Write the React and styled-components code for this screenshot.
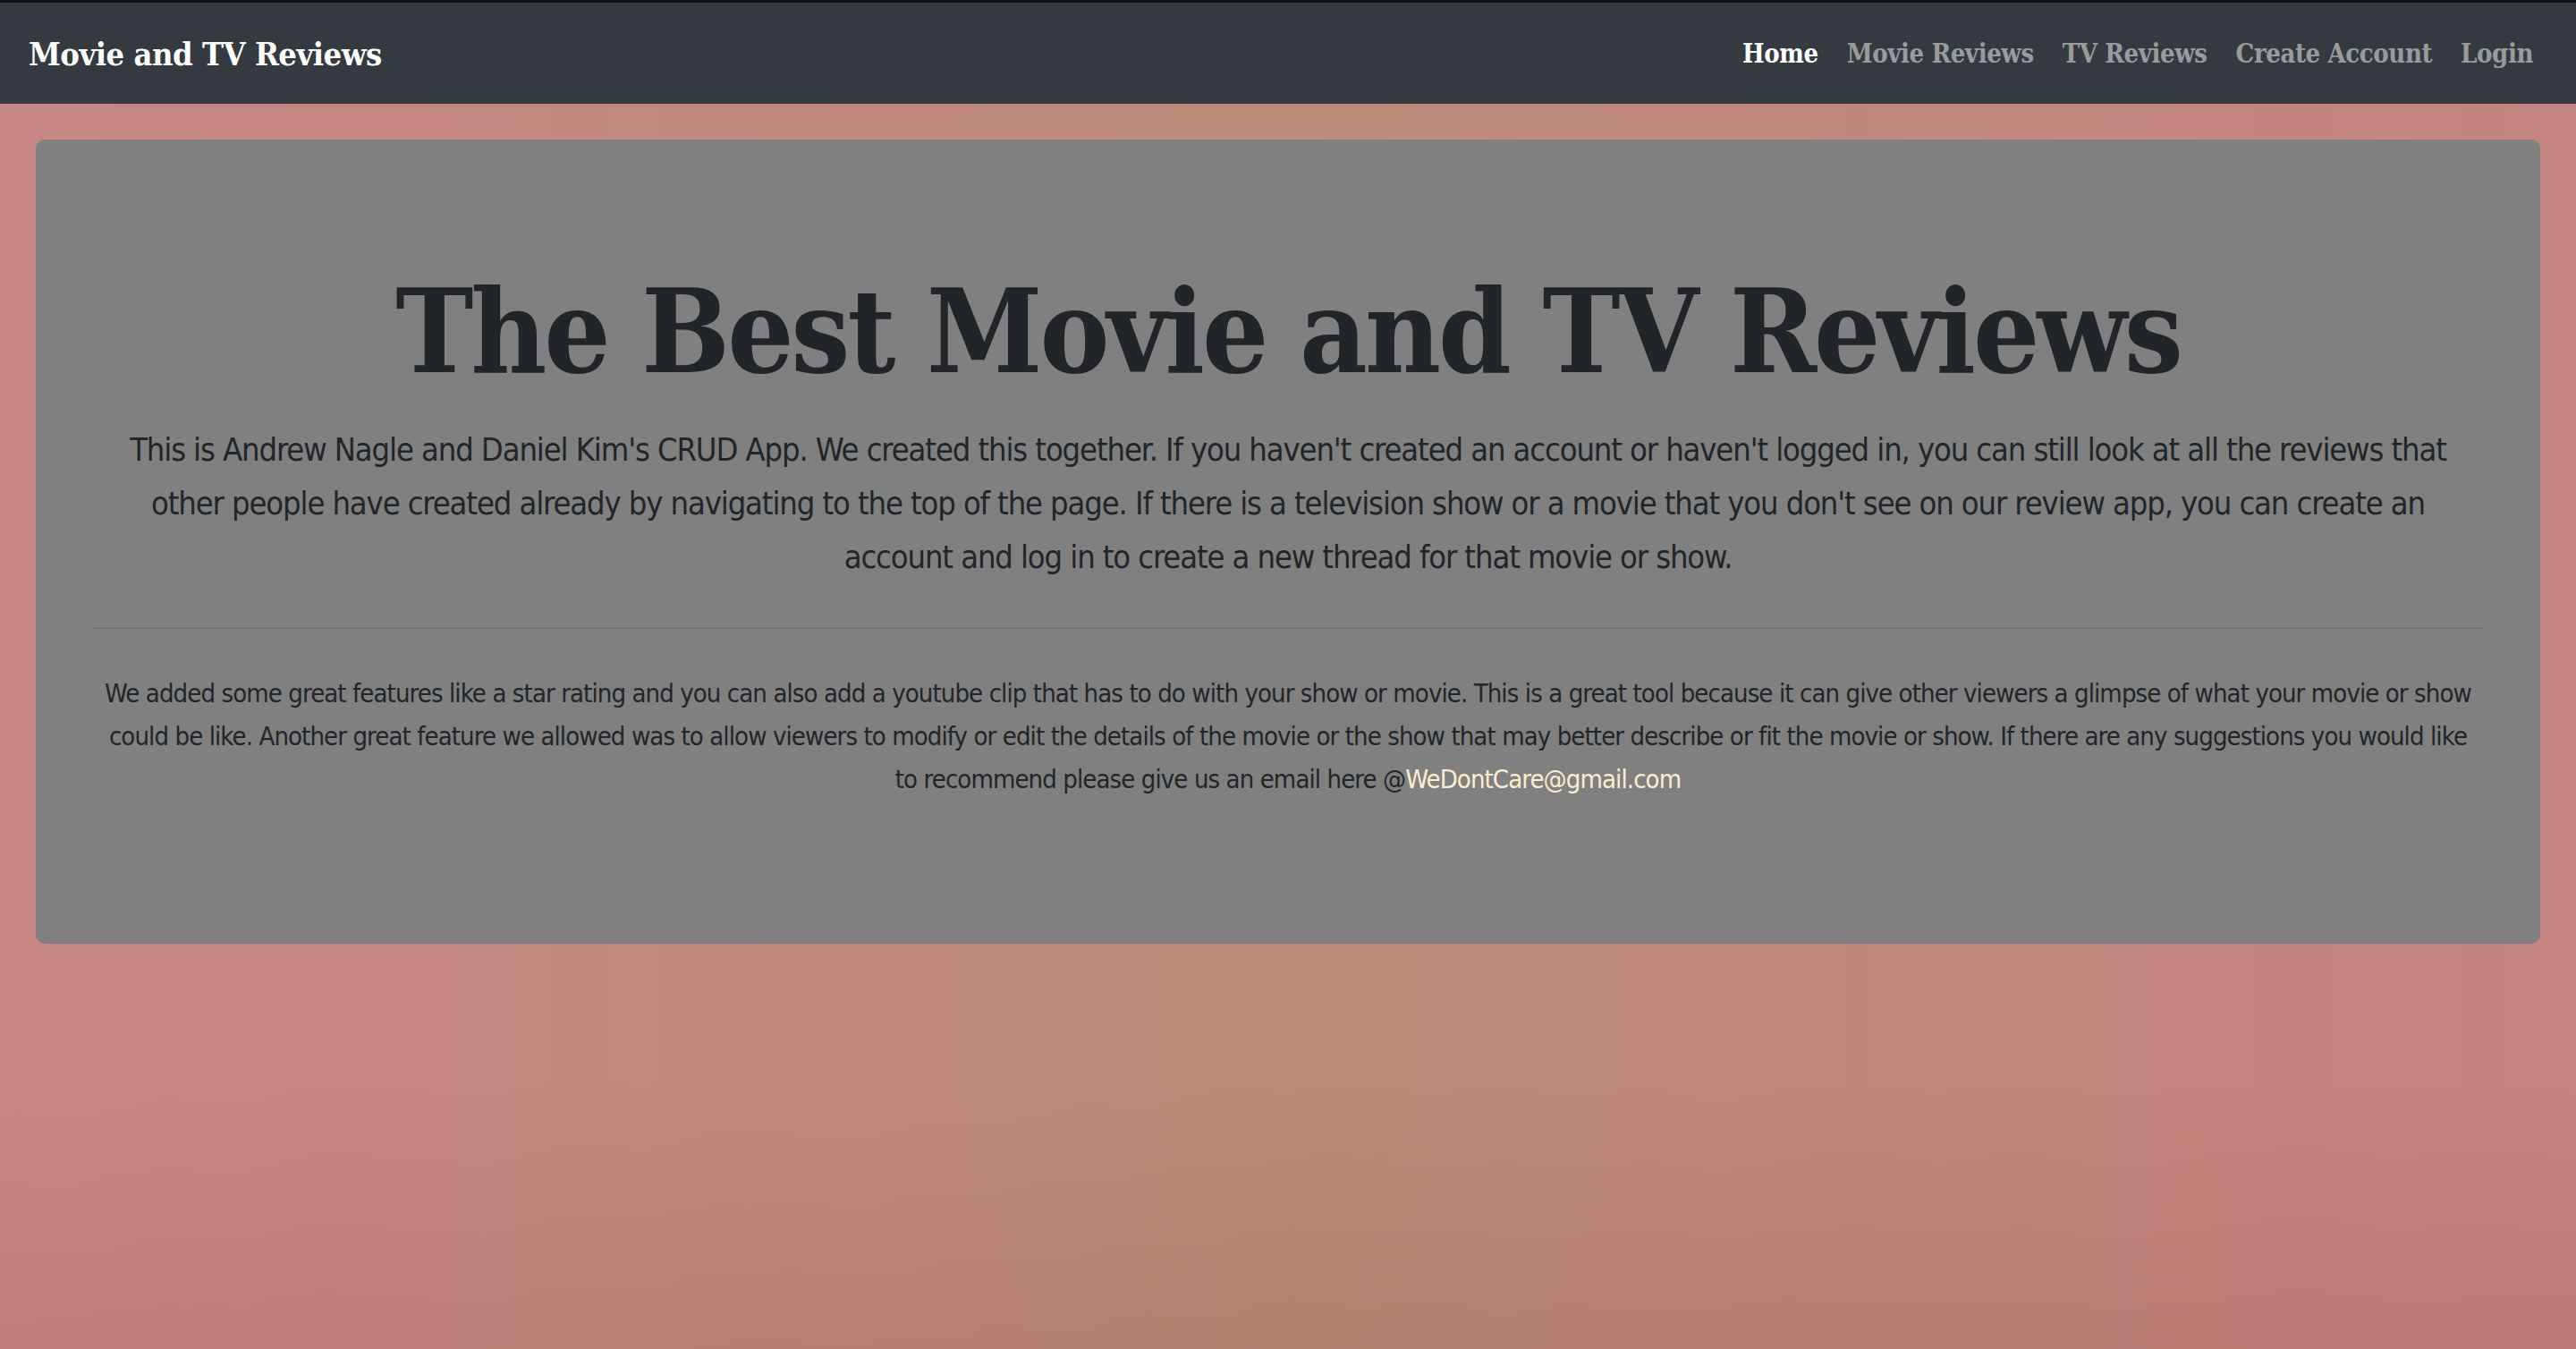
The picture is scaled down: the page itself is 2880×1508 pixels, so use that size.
import React from 'react';
import styled, { createGlobalStyle } from 'styled-components';

const GlobalStyle = createGlobalStyle`
  html, body {
    margin: 0;
    padding: 0;
  }
  body {
    min-height: 1508px;
    font-family: "DejaVu Sans Condensed", "DejaVu Sans", sans-serif;
    color: #212529;
    background:
      linear-gradient(to bottom, rgba(120, 60, 50, 0) 80%, rgba(120, 60, 50, 0.12) 100%),
      linear-gradient(to right, #c88784 0%, #c2897e 25%, #bb8b77 50%, #c0877c 75%, #c4847f 100%);
  }
`;

const Page = styled.div`
  min-height: 1508px;
  display: flex;
  flex-direction: column;
`;

const Navbar = styled.nav`
  display: flex;
  align-items: center;
  justify-content: space-between;
  height: 113px;
  padding: 0 32px;
  border-top: 3px solid #121212;
  background: #343a40;
`;

const Brand = styled.a`
  font-family: "DejaVu Serif Condensed", "DejaVu Serif", serif;
  font-weight: 700;
  font-size: 36px;
  letter-spacing: -0.5px;
  color: #fff;
  text-decoration: none;
`;

const NavList = styled.ul`
  display: flex;
  margin: 0;
  padding: 0;
  list-style: none;
`;

const NavLink = styled.a`
  display: block;
  padding: 10px 16px;
  font-family: "DejaVu Serif Condensed", "DejaVu Serif", serif;
  font-weight: 700;
  font-size: 29px;
  letter-spacing: -0.4px;
  color: ${({ active }) => (active ? '#ffffff' : 'rgba(255, 255, 255, 0.5)')};
  text-decoration: none;
`;

const Main = styled.main`
  padding: 40px 40px 0;
`;

const Jumbotron = styled.section`
  padding: 128px 64px;
  border-radius: 10px;
  background: #808080;
  text-align: center;
`;

const Title = styled.h1`
  margin: 0 0 16px;
  font-family: "DejaVu Serif Condensed", "DejaVu Serif", serif;
  font-weight: 700;
  font-size: 130px;
  letter-spacing: -3px;
  line-height: 173px;
  color: #212529;
`;

const Lead = styled.p`
  margin: 0;
  font-size: 36px;
  letter-spacing: -1.1px;
  line-height: 60px;
  white-space: nowrap;
`;

const Divider = styled.hr`
  margin: 48px 0;
  border: 0;
  border-top: 2px solid rgba(0, 0, 0, 0.1);
`;

const Body = styled.p`
  margin: 0 0 32px;
  font-size: 29px;
  letter-spacing: -0.9px;
  line-height: 48px;
  white-space: nowrap;
`;

const Email = styled.a`
  color: #ffecd0;
  text-decoration: none;
`;

const links = ['Home', 'Movie Reviews', 'TV Reviews', 'Create Account', 'Login'];

export default function App() {
  return (
    <Page>
      <GlobalStyle />
      <Navbar>
        <Brand href="#">Movie and TV Reviews</Brand>
        <NavList>
          {links.map((l, i) => (
            <li key={l}>
              <NavLink href="#" active={i === 0 ? 1 : 0}>{l}</NavLink>
            </li>
          ))}
        </NavList>
      </Navbar>
      <Main>
        <Jumbotron>
          <Title>The Best Movie and TV Reviews</Title>
          <Lead>
            This is Andrew Nagle and Daniel Kim's CRUD App. We created this together. If you haven't created an account or haven't logged in, you can still look at all the reviews that
            <br />
            other people have created already by navigating to the top of the page. If there is a television show or a movie that you don't see on our review app, you can create an
            <br />
            account and log in to create a new thread for that movie or show.
          </Lead>
          <Divider />
          <Body>
            We added some great features like a star rating and you can also add a youtube clip that has to do with your show or movie. This is a great tool because it can give other viewers a glimpse of what your movie or show
            <br />
            could be like. Another great feature we allowed was to allow viewers to modify or edit the details of the movie or the show that may better describe or fit the movie or show. If there are any suggestions you would like
            <br />
            to recommend please give us an email here @<Email href="#">WeDontCare@gmail.com</Email>
          </Body>
        </Jumbotron>
      </Main>
    </Page>
  );
}
